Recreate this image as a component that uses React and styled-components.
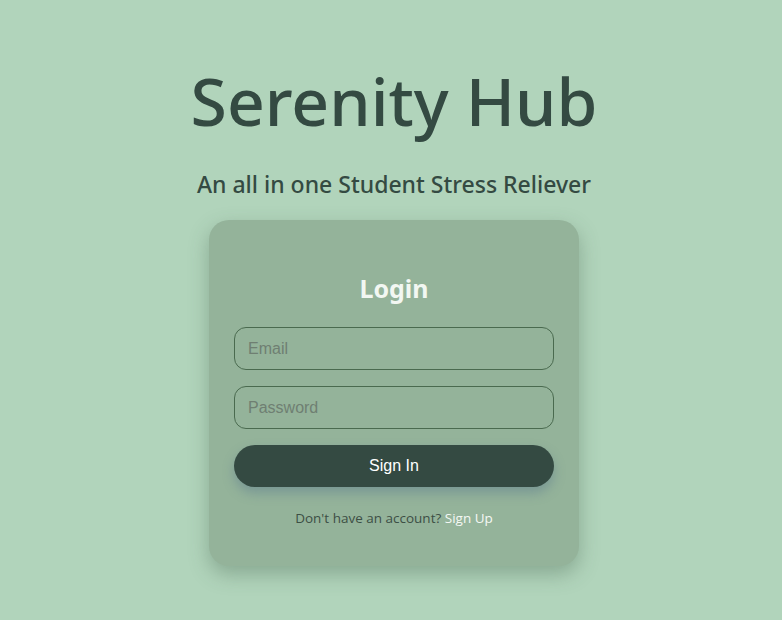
import React from "react";
import styled, { createGlobalStyle } from "styled-components";

const GlobalStyle = createGlobalStyle`
  html, body {
    margin: 0;
    padding: 0;
    background-color: #b1d4bb;
  }
  * {
    box-sizing: border-box;
  }
`;

const Page = styled.div`
  min-height: 620px;
  padding-left: 6px;
  display: flex;
  flex-direction: column;
  align-items: center;
  font-family: "Noto Sans", "Open Sans", sans-serif;
  color: #344a42;
`;

const Title = styled.h1`
  margin: 55px 0 0;
  font-size: 66px;
  font-weight: 500;
  line-height: 90px;
  letter-spacing: 0;
`;

const Subtitle = styled.h2`
  margin: 23px 0 0;
  font-size: 23px;
  font-weight: 500;
  line-height: 32px;
`;

const Card = styled.div`
  margin-top: 20px;
  width: 370px;
  height: 346px;
  padding: 50px 25px 0;
  border-radius: 20px;
  background-color: #94b39a;
  box-shadow: 0 8px 20px rgba(60, 90, 70, 0.35);
  display: flex;
  flex-direction: column;
`;

const CardTitle = styled.h3`
  margin: 0 0 21px;
  text-align: center;
  font-size: 25px;
  font-weight: 700;
  color: #f2f7f2;
  line-height: 36px;
`;

const Input = styled.input`
  width: 320px;
  height: 43px;
  margin-bottom: 16px;
  padding: 0 13px;
  border: 1px solid #4a6a4f;
  border-radius: 12px;
  background: transparent;
  font-family: "Liberation Sans", Arial, sans-serif;
  font-size: 16px;
  color: #344a42;
  outline: none;

  &::placeholder {
    color: #6f7f72;
  }
`;

const Button = styled.button`
  width: 320px;
  height: 42px;
  border: none;
  border-radius: 21px;
  background-color: #344a42;
  color: #ffffff;
  font-family: "Liberation Sans", Arial, sans-serif;
  font-size: 16px;
  box-shadow: 0 6px 12px rgba(80, 110, 140, 0.4);
  cursor: pointer;
`;

const Footer = styled.p`
  margin: 22px 0 0;
  text-align: center;
  font-family: "Open Sans", "Noto Sans", sans-serif;
  font-size: 13.5px;
  color: #3d4f45;
`;

const Link = styled.a`
  color: #f4f8f4;
  text-decoration: none;
  cursor: pointer;
`;

export default function App() {
  return (
    <>
      <GlobalStyle />
      <Page>
        <Title>Serenity Hub</Title>
        <Subtitle>An all in one Student Stress Reliever</Subtitle>
        <Card>
          <CardTitle>Login</CardTitle>
          <Input type="email" placeholder="Email" />
          <Input type="password" placeholder="Password" />
          <Button>Sign In</Button>
          <Footer>
            Don't have an account? <Link>Sign Up</Link>
          </Footer>
        </Card>
      </Page>
    </>
  );
}
